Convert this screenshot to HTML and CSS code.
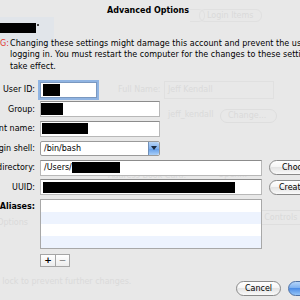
FILE: index.html
```html
<!DOCTYPE html>
<html>
<head>
<meta charset="utf-8">
<title>Advanced Options</title>
<link rel="stylesheet" href="styles.css">
</head>
<body>
<div class="backdrop" aria-hidden="true">
  <div class="g-sidebar"></div>
  <div class="g-tab g-tab1"></div>
  <div class="g-tab g-tab2">Login Items</div>
  <div class="g-text g-fullname">Full Name:</div>
  <div class="g-field g-fullfield">Jeff Kendall</div>
  <div class="g-text g-short">jeff_kendall</div>
  <div class="g-btn g-change">Change...</div>
  <div class="g-text g-book">Address Book Card:</div>
  <div class="g-text g-open">Open...</div>
  <div class="g-box g-controls">Parental Controls</div>
  <div class="g-text g-options">Login Options</div>
  <div class="g-text g-lock">Click the lock to prevent further changes.</div>
</div>

<div class="sheet">
  <div class="title">Advanced Options</div>
  <div class="account"><span class="redact r-account"></span><span class="tick"></span></div>
  <div class="warning">
    <div class="warn-label"><span>WARNING:</span></div>
    <p class="warn-text">Changing these settings might damage this account and prevent the user from<br>logging in. You must restart the computer for the changes to these settings to<br>take effect.</p>
  </div>

  <div class="form">
    <div class="row">
      <div class="label"><span>User ID:</span></div>
      <div class="field f-uid"><span class="redact r-uid"></span></div>
    </div>
    <div class="row">
      <div class="label"><span>Group:</span></div>
      <div class="field f-mid"><span class="redact r-group"></span></div>
    </div>
    <div class="row">
      <div class="label"><span>Account name:</span></div>
      <div class="field f-mid"><span class="redact r-name"></span></div>
    </div>
    <div class="row">
      <div class="label"><span>Login shell:</span></div>
      <div class="popup"><span class="popup-text">/bin/bash</span><span class="popup-arrow"><svg width="6" height="4" viewBox="0 0 6 4"><path d="M0 0H6L3 4Z" fill="#1a2a40"/></svg></span></div>
    </div>
    <div class="row">
      <div class="label"><span>Home directory:</span></div>
      <div class="field f-wide"><span class="path">/Users/</span><span class="redact r-home"></span></div>
      <div class="btn btn-choose">Choose...</div>
    </div>
    <div class="row">
      <div class="label"><span>UUID:</span></div>
      <div class="field f-wide"><span class="redact r-uuid"></span></div>
      <div class="btn btn-create">Create...</div>
    </div>
    <div class="row row-aliases">
      <div class="label label-bold"><span>Aliases:</span></div>
      <div class="list">
        <div class="list-row"></div>
        <div class="list-row alt"></div>
        <div class="list-row"></div>
        <div class="list-row alt"></div>
      </div>
    </div>
    <div class="row row-tools">
      <div class="label"></div>
      <div class="seg">
        <span class="seg-btn">+</span><span class="seg-btn minus">−</span>
      </div>
    </div>
  </div>

  <div class="footer">
    <div class="btn btn-cancel">Cancel</div>
    <div class="btn btn-ok">OK</div>
  </div>
</div>
</body>
</html>
```

FILE: styles.css
```css
* { box-sizing: border-box; }
html, body { margin: 0; padding: 0; }
body {
  width: 300px;
  height: 300px;
  overflow: hidden;
  position: relative;
  background: #e8e8e8;
  font-family: "DejaVu Sans", "Liberation Sans", sans-serif;
  font-size: 8px;
  color: #000;
}

/* faded window behind the sheet */
.backdrop { position: absolute; inset: 0; color: #dadada; white-space: nowrap; }
.backdrop > div { position: absolute; }
.g-sidebar { left: 0; top: 17px; width: 54px; height: 28px; background: #e1e5ea; }
.g-tab { top: 9px; height: 13px; line-height: 11px; border: 1px solid #e0e0e0; border-radius: 6px; padding: 0 7px; }
.g-tab1 { left: 190px; width: 9px; border-left: 0; border-radius: 0 6px 6px 0; }
.g-tab2 { left: 199px; width: 63px; }
.g-fullname { left: 118px; top: 85px; }
.g-fullfield { left: 164px; top: 81px; width: 110px; height: 18px; line-height: 16px; border: 1px solid #e0e0e0; padding-left: 3px; }
.g-short { left: 168px; top: 110px; }
.g-change { left: 220px; top: 109px; width: 57px; height: 14px; line-height: 12px; border: 1px solid #dedede; border-radius: 7px; padding-left: 7px; }
.g-book { left: 108px; top: 171px; }
.g-open { left: 218px; top: 170px; }
.g-controls { left: 222px; top: 210px; width: 100px; height: 15px; line-height: 13px; border: 1px solid #dedede; padding-left: 6px; }
.g-options { left: -27px; top: 218px; }
.g-lock { left: -35px; top: 277px; }

.sheet { position: relative; }

.title {
  height: 22px;
  line-height: 22px;
  text-align: center;
  font-weight: bold;
  padding-right: 4px;
}

.account { display: flex; align-items: flex-start; gap: 1px; margin-top: 1px; height: 10px; }
.redact { display: block; background: #000; flex: none; }
.r-account { width: 36px; height: 10px; }
.tick { display: block; width: 2px; height: 2px; background: #444; margin-top: 1px; }

.warning { display: flex; margin-top: 5px; line-height: 11.3px; }
.warn-label {
  width: 10px;
  flex: none;
  display: flex;
  justify-content: flex-end;
  overflow: hidden;
  white-space: nowrap;
  color: #e2382e;
  padding-right: 1px;
}
.warn-text { margin: 0; white-space: nowrap; letter-spacing: 0.04px; }

.form { display: flex; flex-direction: column; gap: 3.5px; margin-top: 10px; }
.row { display: flex; align-items: center; gap: 5px; height: 16px; }
.label {
  width: 35px;
  flex: none;
  display: flex;
  justify-content: flex-end;
  white-space: nowrap;
}
.label-bold { font-weight: bold; }

.field {
  height: 16px;
  flex: none;
  display: flex;
  align-items: center;
  padding: 0 2px;
  background: #fff;
  border: 1px solid #b8b8b8;
  border-top-color: #8c8c8c;
}
.f-uid { width: 57px; box-shadow: 0 0 0 2px #90b4e2; border-color: #7a98c0; }
.f-mid { width: 120px; }
.f-wide { width: 222px; }
.r-uid { width: 17px; height: 12px; }
.r-group { width: 22px; height: 12px; margin-left: -2px; }
.r-name { width: 46px; height: 11px; margin-left: -1px; }
.path { padding-left: 1px; }
.r-home { width: 48px; height: 11px; }
.r-uuid { width: 192px; height: 11px; }

.popup {
  width: 120px;
  height: 15px;
  flex: none;
  display: flex;
  background: #fff;
  border: 1px solid #9a9a9a;
  border-radius: 2px;
}
.popup-text { flex: 1; padding-left: 3px; line-height: 13px; }
.popup-arrow {
  width: 11px;
  display: flex;
  align-items: center;
  justify-content: center;
  background: linear-gradient(#b7d4f6, #7fb0ee 50%, #5f9ae8 50%, #a9cff8);
  border-left: 1px solid #6f8fb8;
  border-radius: 0 2px 2px 0;
}

.btn {
  height: 15px;
  line-height: 13px;
  flex: none;
  border: 1px solid #8a8a8a;
  border-radius: 8px;
  background: linear-gradient(#ffffff, #f4f4f4 50%, #e4e4e4 50%, #fafafa);
  white-space: nowrap;
  text-align: center;
}
.btn-choose { margin-left: 2px; padding: 0 12px; }
.btn-create { margin-left: 2px; padding: 0 9px; }

.row-aliases { height: 50px; align-items: flex-start; }
.row-aliases .label { line-height: 12px; padding-top: 2px; }
.list {
  width: 222px;
  height: 50px;
  flex: none;
  border: 1px solid #a8a8a8;
  background: #fff;
  display: flex;
  flex-direction: column;
}
.list-row { height: 12px; flex: none; }
.list-row.alt { background: #edf3fe; }

.row-tools { height: 13px; margin-top: 1.5px; }
.seg { display: flex; border: 1px solid #a5a5a5; height: 13px; background: linear-gradient(#fff, #ececec); }
.seg-btn {
  width: 14px;
  text-align: center;
  line-height: 11px;
  font-weight: bold;
  font-size: 9px;
}
.seg-btn.minus { border-left: 1px solid #a5a5a5; color: #777; font-weight: normal; }

.footer { display: flex; gap: 7px; padding-left: 236px; margin-top: 14px; }
.btn-cancel { width: 45px; }
.btn-ok {
  width: 45px;
  border-color: #4e72a6;
  background: linear-gradient(#b5d5fa, #79adee 50%, #4d8de6 50%, #93c4f7);
}
```
